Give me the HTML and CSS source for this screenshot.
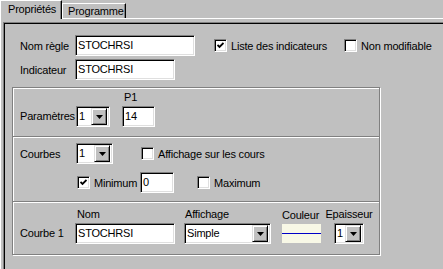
FILE: index.html
```html
<!DOCTYPE html>
<html>
<head>
  <meta charset="UTF-8">
  <title>Propriétés</title>
  <link rel="stylesheet" href="styles.css">
</head>
<body>
  <div class="tabs">
    <div class="tab active">Propriétés</div>
    <div class="tab">Programme</div>
  </div>

  <div class="page">
    <div class="panel">
      <div class="row">
        <span class="lbl">Nom règle</span>
        <div class="field w-name">STOCHRSI</div>
        <div class="opt opt-list">
          <span class="check checked"><svg width="7" height="7" viewBox="0 0 7 7"><polyline points="0.5,3 2.5,5 6.5,1" fill="none" stroke="#000" stroke-width="1.8"/></svg></span>
          <span>Liste des indicateurs</span>
        </div>
        <div class="opt">
          <span class="check"></span>
          <span>Non modifiable</span>
        </div>
      </div>
      <div class="row row-ind">
        <span class="lbl">Indicateur</span>
        <div class="field w-ind">STOCHRSI</div>
      </div>

      <div class="frame">
        <!-- paramètres -->
        <div class="section sec-params">
          <span class="lbl lbl-bottom w-par">Paramètres</span>
          <div class="select w-sel1"><span>1</span><span class="btn"><svg width="7" height="4" viewBox="0 0 7 4"><polygon points="0,0 7,0 3.5,4" fill="#000"/></svg></span></div>
          <div class="col col-p1">
            <span class="head">P1</span>
            <div class="field">14</div>
          </div>
        </div>

        <!-- courbes -->
        <div class="section sec-curves">
          <div class="row-c">
            <span class="lbl w-par">Courbes</span>
            <div class="select w-sel2"><span>1</span><span class="btn"><svg width="7" height="4" viewBox="0 0 7 4"><polygon points="0,0 7,0 3.5,4" fill="#000"/></svg></span></div>
            <div class="opt opt-cours">
              <span class="check"></span>
              <span>Affichage sur les cours</span>
            </div>
          </div>
          <div class="row-c row-min">
            <div class="opt opt-min">
              <span class="check checked"><svg width="7" height="7" viewBox="0 0 7 7"><polyline points="0.5,3 2.5,5 6.5,1" fill="none" stroke="#000" stroke-width="1.8"/></svg></span>
              <span>Minimum</span>
            </div>
            <div class="field w-min">0</div>
            <div class="opt opt-max">
              <span class="check"></span>
              <span>Maximum</span>
            </div>
          </div>
        </div>

        <!-- courbe 1 -->
        <div class="section sec-curve">
          <span class="lbl lbl-bottom w-crb">Courbe 1</span>
          <div class="col col-nom">
            <span class="head">Nom</span>
            <div class="field">STOCHRSI</div>
          </div>
          <div class="col col-aff">
            <span class="head">Affichage</span>
            <div class="select"><span>Simple</span><span class="btn"><svg width="7" height="4" viewBox="0 0 7 4"><polygon points="0,0 7,0 3.5,4" fill="#000"/></svg></span></div>
          </div>
          <div class="col col-coul">
            <span class="head">Couleur</span>
            <div class="swatch"><div class="swatch-line"></div></div>
          </div>
          <div class="col col-ep">
            <span class="head">Epaisseur</span>
            <div class="select w-sel3"><span>1</span><span class="btn"><svg width="7" height="4" viewBox="0 0 7 4"><polygon points="0,0 7,0 3.5,4" fill="#000"/></svg></span></div>
          </div>
        </div>
      </div>
    </div>
  </div>
</body>
</html>
```

FILE: styles.css
```css
body {
  margin: 0;
  width: 443px;
  height: 269px;
  overflow: hidden;
  background-color: #c0c0c0;
  color: #000;
  font-family: "Liberation Sans", Arial, sans-serif;
  font-size: 11px;
  letter-spacing: -0.2px;
}
.tabs {
  display: flex;
  align-items: flex-end;
  height: 18px;
}
.tab {
  box-sizing: border-box;
  height: 15px;
  padding: 0 5px 0 5px;
  line-height: 14px;
  border-left: 1px solid #fff;
  border-top: 1px solid #fff;
  border-right: 1px solid #000;
  box-shadow: inset -1px 0 0 #808080;
}
.tab.active {
  position: relative;
  z-index: 1;
  height: 19px;
  margin-bottom: -1px;
  width: 62px;
  padding: 0 0 0 7px;
  line-height: 17px;
  background-color: #c0c0c0;
}
.tab + .tab {
  width: 64px;
}
.page {
  box-sizing: border-box;
  height: 251px;
  border-top: 1px solid #fff;
  border-left: 1px solid #fff;
  padding: 3px 0 0 2px;
}
.panel {
  box-sizing: border-box;
  width: 440px;
  height: 250px;
  border-top: 1px solid #808080;
  border-left: 1px solid #808080;
  box-shadow: inset 1px 1px 0 #000;
  padding: 12px 0 0 8px;
}
.row {
  display: flex;
  align-items: center;
  height: 21px;
  padding-left: 8px;
}
.row-ind {
  margin-top: 3px;
}
.lbl {
  width: 55px;
  flex: none;
}
.lbl-bottom {
  align-self: flex-end;
  line-height: 21px;
}
.w-par {
  width: 56px;
}
.w-crb {
  width: 55px;
}
.field, .select {
  box-sizing: border-box;
  height: 21px;
  flex: none;
  background-color: #fff;
  border-top: 1px solid #808080;
  border-left: 1px solid #808080;
  border-bottom: 1px solid #fff;
  border-right: 1px solid #fff;
  box-shadow: inset 1px 1px 0 #000, inset -1px -1px 0 #dfdfdf;
  padding: 0 0 0 2px;
  line-height: 19px;
  white-space: nowrap;
}
.w-name { width: 120px; }
.w-ind { width: 100px; }
.w-min { width: 34px; }
.select {
  display: flex;
  justify-content: space-between;
  align-items: center;
  padding-right: 2px;
}
.w-sel1 { width: 34px; }
.w-sel2 { width: 37px; }
.w-sel3 { width: 30px; margin: 0 auto; }
.btn {
  box-sizing: border-box;
  width: 16px;
  height: 17px;
  display: flex;
  align-items: center;
  justify-content: center;
  background-color: #c0c0c0;
  border-top: 1px solid #dfdfdf;
  border-left: 1px solid #dfdfdf;
  border-bottom: 1px solid #000;
  border-right: 1px solid #000;
  box-shadow: inset 1px 1px 0 #fff, inset -1px -1px 0 #808080;
  padding-top: 1px;
}
.opt {
  display: flex;
  align-items: center;
  gap: 4px;
  flex: none;
  white-space: nowrap;
}
.opt-list {
  width: 130px;
  margin-left: 19px;
}
.check {
  box-sizing: border-box;
  width: 13px;
  height: 13px;
  flex: none;
  display: flex;
  align-items: center;
  justify-content: center;
  background-color: #fff;
  border-top: 1px solid #808080;
  border-left: 1px solid #808080;
  border-bottom: 1px solid #fff;
  border-right: 1px solid #fff;
  box-shadow: inset 1px 1px 0 #000, inset -1px -1px 0 #dfdfdf;
}
.frame {
  box-sizing: border-box;
  width: 368px;
  height: 168px;
  margin-top: 7px;
  border: 1px solid #808080;
  box-shadow: 1px 1px 0 #fff, inset 1px 1px 0 #fff;
}
.section {
  padding-left: 7px;
}
.section + .section {
  border-top: 1px solid #808080;
  box-shadow: inset 0 1px 0 #fff;
}
.sec-params {
  display: flex;
  align-items: flex-end;
  padding-top: 3px;
  padding-bottom: 9px;
}
.col {
  display: flex;
  flex-direction: column;
  flex: none;
}
.head {
  line-height: 13px;
  margin-bottom: 2px;
  white-space: nowrap;
}
.col-p1 {
  width: 33px;
  margin-left: 12px;
}
.col-p1 .head, .col-nom .head {
  padding-left: 2px;
}
.sec-curves {
  padding-top: 6px;
  padding-bottom: 8px;
}
.row-c {
  display: flex;
  align-items: center;
  height: 21px;
}
.opt-cours {
  margin-left: 28px;
}
.row-min {
  margin-top: 8px;
  padding-left: 57px;
}
.opt-min {
  width: 63px;
}
.opt-max {
  margin-left: 23px;
}
.sec-curve {
  display: flex;
  align-items: flex-end;
  padding-top: 6px;
  padding-bottom: 10px;
}
.col-nom {
  width: 100px;
}
.col-aff {
  width: 87px;
  margin-left: 9px;
}
.col-aff .head {
  padding-left: 1px;
}
.col-coul {
  width: 39px;
  margin-left: 11px;
}
.swatch {
  height: 19px;
  margin-bottom: 1px;
  display: flex;
  align-items: center;
  background-color: #f8f8e6;
}
.swatch-line {
  width: 100%;
  border-top: 1px solid #0000c8;
}
.col-ep {
  width: 46px;
  margin-left: 5px;
  align-items: center;
}
```
